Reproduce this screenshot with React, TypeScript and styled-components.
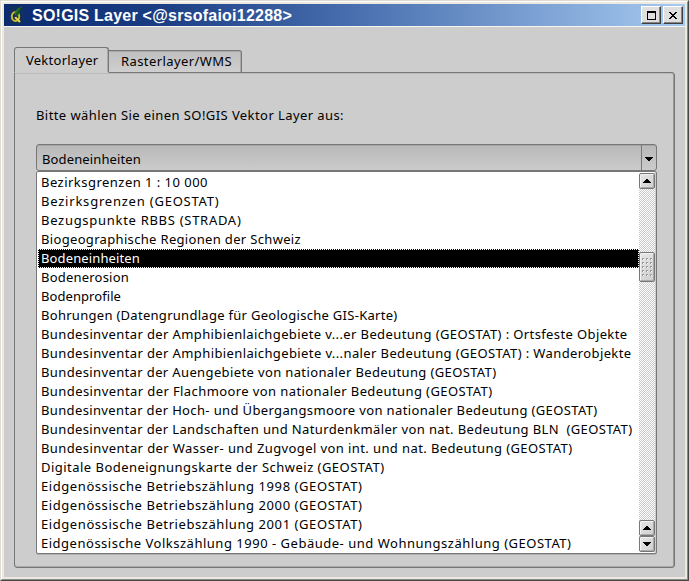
import React, { useLayoutEffect, useRef, useState } from "react";
import styled, { createGlobalStyle } from "styled-components";

const Global = createGlobalStyle`
  * { box-sizing: border-box; }
  html, body { margin: 0; padding: 0; }
  body { font-family: "Noto Sans", sans-serif; font-size: 13px; color: #000; overflow: hidden; }
`;

const Frame = styled.div`
  width: 689px;
  height: 581px;
  display: flex;
  border-style: solid;
  border-width: 1px;
  border-color: #dedbd2 #484848 #484848 #dedbd2;
`;

const Bevel = styled.div`
  flex: 1;
  display: flex;
  border-style: solid;
  border-width: 1px;
  border-color: #fff #8c8a84 #8c8a84 #fff;
`;

const Window = styled.div`
  flex: 1;
  display: flex;
  flex-direction: column;
  border: 2px solid #ece9e0;
  background: #cdcdcd;
`;

const TitleBar = styled.div`
  height: 22px;
  flex: none;
  display: flex;
  align-items: center;
  padding: 0 2px 0 5px;
  background: linear-gradient(90deg, #0b2a70 0%, #1a3d82 22%, #4a70b0 52%, #a6caf0 100%);
`;

const AppIcon = styled.svg`
  width: 15px;
  height: 18px;
  flex: none;
`;

const Title = styled.div`
  flex: 1;
  margin-left: 8px;
  padding-top: 1px;
  font: bold 16px/22px "Liberation Sans", Arial, sans-serif;
  color: #fff;
  white-space: pre;
`;

const TitleButton = styled.button`
  width: 20px;
  height: 18px;
  margin-left: 2px;
  padding: 0;
  display: flex;
  align-items: center;
  justify-content: center;
  background: #dfdfdf;
  border-style: solid;
  border-width: 1px;
  border-color: #fff #404040 #404040 #fff;
  box-shadow: inset -1px -1px #848484;
`;

const Body = styled.div`
  flex: 1;
  display: flex;
  flex-direction: column;
  padding: 20px 10px 9px;
  border-top: 1px solid #f7f5ef;
`;

const Tabs = styled.div`
  display: flex;
  align-items: flex-end;
  height: 26px;
  flex: none;
`;

const Tab = styled.div<{ $active?: boolean }>`
  width: ${(p) => (p.$active ? 95 : 133)}px;
  height: ${(p) => (p.$active ? 26 : 23)}px;
  padding-left: ${(p) => (p.$active ? 11 : 12)}px;
  line-height: ${(p) => (p.$active ? 24 : 20)}px;
  border: 1px solid #777;
  border-left-width: ${(p) => (p.$active ? 1 : 0)}px;
  border-bottom-color: ${(p) => (p.$active ? "#cdcdcd" : "#777")};
  border-radius: ${(p) => (p.$active ? "3px 3px 0 0" : "0 3px 0 0")};
  background: ${(p) => (p.$active ? "#cdcdcd" : "linear-gradient(#c0bfc0, #d0cfd0)")};
  box-shadow: ${(p) => (p.$active ? "inset -1px 0 #aaa" : "inset 0 1px #aaa, inset -1px 0 #aaa")};
  position: relative;
  z-index: 1;
`;

const Panel = styled.div`
  flex: 1;
  margin-top: -1px;
  padding: 31px 17px 12px 21px;
  border: 1px solid #777;
  border-radius: 0 3px 3px 3px;
  box-shadow: inset -1px 0 #999, inset 0 1px #bababa, inset 0 -1px #aaa;
`;

const Prompt = styled.div`
  height: 40px;
  line-height: 22px;
`;

const Combo = styled.div`
  display: flex;
  width: 621px;
  height: 27px;
  border: 1px solid #777;
  border-radius: 3px;
  background: linear-gradient(#b9b8b9, #cbcbcb);
  box-shadow: inset 0 1px #a5a5a5;
`;

const ComboValue = styled.div`
  flex: 1;
  padding-left: 5px;
  line-height: 28px;
`;

const ComboArrow = styled.div`
  width: 15px;
  display: flex;
  align-items: center;
  justify-content: center;
  border-left: 1px solid #777;
  padding-top: 3px;
`;

const ListBox = styled.div`
  display: flex;
  width: 621px;
  height: 383px;
  padding: 1px;
  border: 1px solid #777;
  border-radius: 2px;
  background: #fff;
  box-shadow: inset -1px 0 #cdcdcd, 0 1px #b0b0b0;
`;

const Rows = styled.div`
  flex: 1;
`;

const Row = styled.div<{ $selected?: boolean }>`
  height: 19px;
  padding: 0 0 1px 2px;
  line-height: 16px;
  border: 1px ${(p) => (p.$selected ? "dotted #fff" : "solid transparent")};
  background: ${(p) => (p.$selected ? "#000" : "transparent")};
  color: ${(p) => (p.$selected ? "#fff" : "#000")};
  display: flex;
  align-items: center;
`;

const Scrollbar = styled.div`
  width: 16px;
  display: flex;
  flex-direction: column;
  background: repeating-conic-gradient(#c9c9c9 0 25%, #fff 0 50%) 0 0 / 2px 2px;
`;

const Spacer = styled.div<{ $size?: number }>`
  flex: ${(p) => (p.$size ? `0 0 ${p.$size}px` : "1")};
`;

const ScrollButton = styled.div`
  height: 16px;
  display: flex;
  align-items: center;
  justify-content: center;
  border: 1px solid #777;
  border-radius: 2px;
  background: linear-gradient(135deg, #e6e6e6, #cfcfcf);
  box-shadow: inset 1px 1px #f2f2f2, inset -1px -1px #aaa;
`;

const Thumb = styled(ScrollButton)`
  height: 30px;
`;

const Label = styled.span`
  display: inline-block;
  white-space: pre;
`;

/* Spreads the glyphs so that the text fills the given width. */
function Fit({ text, width }: { text: string; width: number }) {
  const ref = useRef<HTMLSpanElement>(null);
  const [spacing, setSpacing] = useState(0);
  useLayoutEffect(() => {
    if (ref.current) {
      setSpacing((width - ref.current.getBoundingClientRect().width) / text.length);
    }
  }, [text, width]);
  return <Label ref={ref} style={{ letterSpacing: spacing }}>{text}</Label>;
}

function Arrow({ up }: { up?: boolean }) {
  return (
    <svg width="8" height="4" viewBox="0 0 8 4" shapeRendering="crispEdges">
      <path d={up ? "M3 0h2v1h1v1h1v1h1v1H0V3h1V2h1V1h1z" : "M0 0h8v1H7v1H6v1H5v1H3V3H2V2H1V1H0z"} />
    </svg>
  );
}

function Grip() {
  return (
    <svg width="11" height="19" shapeRendering="crispEdges">
      {[0, 4, 8, 12, 16].map((y) =>
        [0, 4, 8].map((x) => (
          <g key={`${x}-${y}`}>
            <path d={`M${x} ${y}h2v1h-1v1h-1z`} fill="#999" />
            <path d={`M${x + 1} ${y + 1}h1v1h-1z`} fill="#fff" />
          </g>
        ))
      )}
    </svg>
  );
}

const layers: [string, number][] = [
  ["Bezirksgrenzen 1 : 10 000", 167],
  ["Bezirksgrenzen (GEOSTAT)", 178.5],
  ["Bezugspunkte RBBS (STRADA)", 200.5],
  ["Biogeographische Regionen der Schweiz", 260],
  ["Bodeneinheiten", 99],
  ["Bodenerosion", 88],
  ["Bodenprofile", 80],
  ["Bohrungen (Datengrundlage für Geologische GIS-Karte)", 356.5],
  ["Bundesinventar der Amphibienlaichgebiete v...er Bedeutung (GEOSTAT) : Ortsfeste Objekte", 586.5],
  ["Bundesinventar der Amphibienlaichgebiete v...naler Bedeutung (GEOSTAT) : Wanderobjekte", 590.5],
  ["Bundesinventar der Auengebiete von nationaler Bedeutung (GEOSTAT)", 455.5],
  ["Bundesinventar der Flachmoore von nationaler Bedeutung (GEOSTAT)", 451.5],
  ["Bundesinventar der Hoch- und Übergangsmoore von nationaler Bedeutung (GEOSTAT)", 556.5],
  ["Bundesinventar der Landschaften und Naturdenkmäler von nat. Bedeutung BLN  (GEOSTAT)", 591.5],
  ["Bundesinventar der Wasser- und Zugvogel von int. und nat. Bedeutung (GEOSTAT)", 531.5],
  ["Digitale Bodeneignungskarte der Schweiz (GEOSTAT)", 343.5],
  ["Eidgenössische Betriebszählung 1998 (GEOSTAT)", 321.5],
  ["Eidgenössische Betriebszählung 2000 (GEOSTAT)", 321.5],
  ["Eidgenössische Betriebszählung 2001 (GEOSTAT)", 321.5],
  ["Eidgenössische Volkszählung 1990 - Gebäude- und Wohnungszählung (GEOSTAT)", 530.5],
];

export default function App() {
  return (
    <Frame>
      <Global />
      <Bevel>
        <Window>
          <TitleBar>
            <AppIcon viewBox="0 0 15 18">
              <path d="M0 0h15v18H0z" fill="#12305c" />
              <ellipse cx="6.5" cy="10.5" rx="3.7" ry="4.5" fill="none" stroke="#c8b832" strokeWidth="2" />
              <path d="M6 11l5 5" stroke="#e4d84c" strokeWidth="2" />
              <path d="M13 1c-5 1-8 4-7 8 1 2 3 1 4-1 1-3 1-4 3-7z" fill="#25702b" />
              <path d="M12 2L6 11" stroke="#0b3a18" strokeWidth="1" />
            </AppIcon>
            <Title><Fit text="SO!GIS Layer <@srsofaioi12288>" width={260} /></Title>
            <TitleButton aria-label="Maximieren">
              <svg width="9" height="9" shapeRendering="crispEdges">
                <path d="M0 0h9v9H0zM1 2v6h7V2z" fillRule="evenodd" />
              </svg>
            </TitleButton>
            <TitleButton aria-label="Schliessen">
              <svg width="8" height="7" shapeRendering="crispEdges">
                <path d="M0 0h2v1h1v1h2V1h1V0h2v1H7v1H6v1H5v1h1v1h1v1h1v1H6V6H5V5H3v1H2v1H0V6h1V5h1V4h1V3H2V2H1V1H0z" />
              </svg>
            </TitleButton>
          </TitleBar>
          <Body>
            <Tabs>
              <Tab $active><Fit text="Vektorlayer" width={72.5} /></Tab>
              <Tab><Fit text="Rasterlayer/WMS" width={111} /></Tab>
            </Tabs>
            <Panel>
              <Prompt><Fit text="Bitte wählen Sie einen SO!GIS Vektor Layer aus:" width={308} /></Prompt>
              <Combo>
                <ComboValue><Fit text="Bodeneinheiten" width={99} /></ComboValue>
                <ComboArrow><Arrow /></ComboArrow>
              </Combo>
              <ListBox>
                <Rows>
                  {layers.map(([name, width]) => (
                    <Row key={name} $selected={name === "Bodeneinheiten"}>
                      <Fit text={name} width={width} />
                    </Row>
                  ))}
                </Rows>
                <Scrollbar>
                  <ScrollButton><Arrow up /></ScrollButton>
                  <Spacer $size={63} />
                  <Thumb><Grip /></Thumb>
                  <Spacer />
                  <ScrollButton><Arrow up /></ScrollButton>
                  <ScrollButton><Arrow /></ScrollButton>
                </Scrollbar>
              </ListBox>
            </Panel>
          </Body>
        </Window>
      </Bevel>
    </Frame>
  );
}
